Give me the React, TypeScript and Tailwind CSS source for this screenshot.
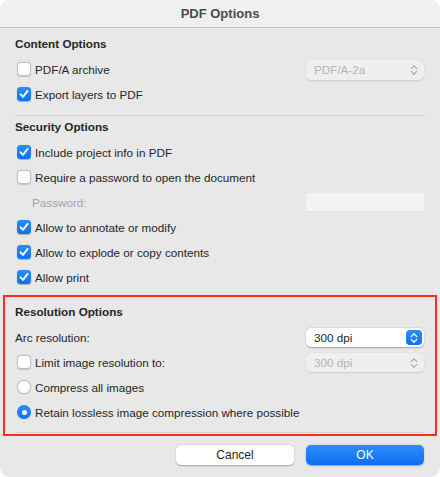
import React from "react";

const FONT = { fontFamily: '"Liberation Sans", Arial, sans-serif' };

function Check({ checked }: { checked: boolean }) {
  if (checked) {
    return (
      <span className="flex h-[14px] w-[14px] shrink-0 items-center justify-center rounded-[3.5px] bg-gradient-to-b from-[#2b8dfc] to-[#0a72f0] shadow-[0_0.5px_1px_rgba(0,0,0,0.25)]">
        <svg width="12" height="12" viewBox="0 0 12 12">
          <path d="M2.6 6.3 L5 8.9 L9.6 2.9" fill="none" stroke="white" strokeWidth="1.9" strokeLinecap="round" strokeLinejoin="round" />
        </svg>
      </span>
    );
  }
  return (
    <span className="h-[14px] w-[14px] shrink-0 rounded-[3.5px] border-[0.5px] border-[#bdbdbd] bg-white shadow-[0_0.5px_1px_rgba(0,0,0,0.15)]" />
  );
}

function Radio({ checked }: { checked: boolean }) {
  if (checked) {
    return (
      <span className="flex h-[14px] w-[14px] shrink-0 items-center justify-center rounded-full bg-gradient-to-b from-[#2b8dfc] to-[#0a72f0] shadow-[0_0.5px_1px_rgba(0,0,0,0.25)]">
        <span className="h-[5px] w-[5px] rounded-full bg-white" />
      </span>
    );
  }
  return (
    <span className="h-[14px] w-[14px] shrink-0 rounded-full border-[0.5px] border-[#bdbdbd] bg-white shadow-[0_0.5px_1px_rgba(0,0,0,0.15)]" />
  );
}

function Chevrons({ color }: { color: string }) {
  return (
    <svg width="8" height="12" viewBox="0 0 8 12">
      <path d="M1.2 4.6 L4 1.8 L6.8 4.6" fill="none" stroke={color} strokeWidth="1.3" strokeLinecap="round" strokeLinejoin="round" />
      <path d="M1.2 7.4 L4 10.2 L6.8 7.4" fill="none" stroke={color} strokeWidth="1.3" strokeLinecap="round" strokeLinejoin="round" />
    </svg>
  );
}

function Select({ value, enabled, h = 20 }: { value: string; enabled: boolean; h?: number }) {
  if (enabled) {
    return (
      <div className="flex h-[19px] w-[118px] items-center justify-between rounded-[5px] bg-white pl-[8px] pr-[2px] text-[#262626] shadow-[0_0.5px_1.5px_rgba(0,0,0,0.3)]">
        <span>{value}</span>
        <span className="flex h-[15px] w-[16px] items-center justify-center rounded-[4px] bg-gradient-to-b from-[#2b8dfc] to-[#0a72f0]">
          <Chevrons color="white" />
        </span>
      </div>
    );
  }
  return (
    <div
      className={`flex w-[118px] items-center justify-between rounded-[5px] bg-[#efefef] pl-[8px] pr-[6px] text-[#b4b4b4] shadow-[0_0.5px_1.5px_rgba(0,0,0,0.12)] ${h === 20 ? "h-[20px]" : "h-[19px]"}`}
    >
      <span>{value}</span>
      <Chevrons color="#b0b0b0" />
    </div>
  );
}

function CheckRow({ label, checked, right }: { label: string; checked: boolean; right?: React.ReactNode }) {
  return (
    <div className="flex h-[25px] items-center justify-between">
      <div className="flex items-center gap-[4px] pl-[2px]">
        <Check checked={checked} />
        <span>{label}</span>
      </div>
      {right}
    </div>
  );
}

function RadioRow({ label, checked }: { label: string; checked: boolean }) {
  return (
    <div className="flex h-[25px] items-center">
      <div className="flex items-center gap-[4px] pl-[2px]">
        <Radio checked={checked} />
        <span>{label}</span>
      </div>
    </div>
  );
}

function Heading({ children }: { children: React.ReactNode }) {
  return <div className="flex h-[20px] items-center font-bold text-[#262626]">{children}</div>;
}

export default function App() {
  return (
    <div className="h-[477px] w-[440px] bg-white" style={FONT}>
      <div className="relative flex h-[477px] w-[440px] flex-col overflow-hidden rounded-[10px] bg-[#e8e8e8] text-[11.7px] text-[#262626]">
        <div className="flex h-[28px] shrink-0 items-center justify-center border-b border-[#c3c3c3] bg-[#f0f0f0] text-[13px] font-bold text-[#4a4a4a]">
          PDF Options
        </div>
        <div className="flex flex-col pl-[15px] pr-[16px] pt-[6px]">
          <Heading>Content Options</Heading>
          <div className="mt-[3px]">
            <CheckRow label="PDF/A archive" checked={false} right={<Select value="PDF/A-2a" enabled={false} />} />
            <CheckRow label="Export layers to PDF" checked={true} />
          </div>
          <div className="mt-[8px] h-[1px] w-[410px] bg-[#d3d3d3]" />
          <div className="mt-[1px]">
            <Heading>Security Options</Heading>
          </div>
          <div className="mt-[3px]">
            <CheckRow label="Include project info in PDF" checked={true} />
            <CheckRow label="Require a password to open the document" checked={false} />
            <div className="flex h-[25px] items-center justify-between">
              <span className="pl-[17px] text-[#a3a3a3]">Password:</span>
              <div className="h-[19px] w-[118px] border-b border-[#e0e0e0] bg-[#f3f3f3]" />
            </div>
            <CheckRow label="Allow to annotate or modify" checked={true} />
            <CheckRow label="Allow to explode or copy contents" checked={true} />
            <CheckRow label="Allow print" checked={true} />
          </div>
          <div className="mt-[12px]">
            <Heading>Resolution Options</Heading>
          </div>
          <div className="mt-[3px]">
            <div className="flex h-[25px] items-center justify-between">
              <span>Arc resolution:</span>
              <Select value="300 dpi" enabled={true} />
            </div>
            <CheckRow label="Limit image resolution to:" checked={false} right={<Select value="300 dpi" enabled={false} h={19} />} />
            <RadioRow label="Compress all images" checked={false} />
            <RadioRow label="Retain lossless image compression where possible" checked={true} />
          </div>
          <div className="mt-[7px] h-[1px] w-[410px] bg-[#d3d3d3]" />
          <div className="mt-[12px] flex justify-end gap-[12px]">
            <button className="h-[20px] w-[118px] rounded-[5px] bg-white text-[12px] text-[#262626] shadow-[0_0.5px_1.5px_rgba(0,0,0,0.3)]">
              Cancel
            </button>
            <button className="h-[20px] w-[118px] rounded-[5px] bg-gradient-to-b from-[#2b8dfc] to-[#0a6ff0] text-[12px] font-medium text-white shadow-[0_0.5px_1.5px_rgba(0,0,0,0.3)]">
              OK
            </button>
          </div>
        </div>
        <div className="pointer-events-none absolute left-[3px] top-[295px] h-[141px] w-[434px] border-[2.5px] border-[#ff2b1c]" />
      </div>
    </div>
  );
}
